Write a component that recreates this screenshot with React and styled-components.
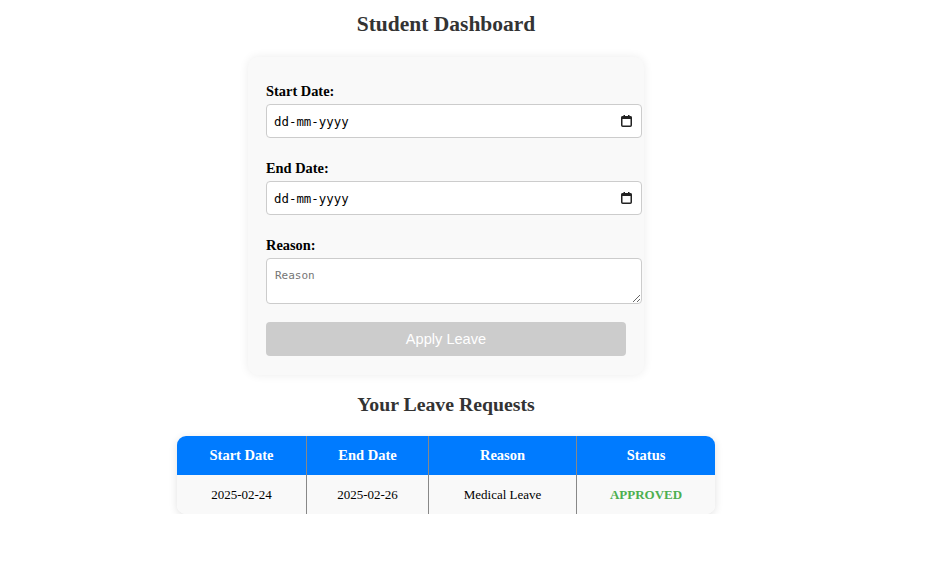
import React, { useState } from "react";
import styled, { createGlobalStyle } from "styled-components";

const GlobalStyle = createGlobalStyle`
  body {
    margin: 0;
    font-family: "Liberation Serif", "Times New Roman", serif;
    background: #fff;
  }
`;

const Page = styled.div`
  width: 892px;
  display: flex;
  flex-direction: column;
  align-items: center;
  padding-top: 12px;
`;

const Title = styled.h2`
  margin: 0 0 20px;
  font-size: 21.5px;
  color: #333;
`;

const Card = styled.form`
  width: 360px;
  padding: 18px 18px 19px;
  background: #f9f9f9;
  border-radius: 10px;
  box-shadow: 0 0 10px rgba(0, 0, 0, 0.08);
`;

const Field = styled.div`
  margin-top: ${(p) => (p.$first ? "8px" : "22px")};
  display: flex;
  flex-direction: column;
`;

const Label = styled.label`
  font-weight: bold;
  font-size: 14.4px;
  margin-bottom: 4px;
  color: #000;
`;

const DateBox = styled.div`
  position: relative;
  width: 376px;
`;

const DateInput = styled.input`
  display: block;
  box-sizing: border-box;
  width: 376px;
  height: 34px;
  padding: 0 30px 0 7px;
  border: 1px solid #ccc;
  border-radius: 4px;
  background: #fff;
  font-family: "DejaVu Sans Mono", monospace;
  font-size: 12.4px;
  color: #000;
  &::placeholder { color: #000; opacity: 1; }
`;

const CalendarIcon = styled.svg`
  position: absolute;
  right: 10px;
  top: 11px;
  pointer-events: none;
`;

const TextArea = styled.textarea`
  display: block;
  box-sizing: border-box;
  width: 376px;
  height: 46px;
  padding: 10px 8px 6px;
  border: 1px solid #ccc;
  border-radius: 4px;
  font-family: "DejaVu Sans Mono", monospace;
  font-size: 11px;
  resize: vertical;
  &::placeholder { color: #757575; }
`;

const Button = styled.button`
  margin-top: 18px;
  width: 100%;
  height: 34px;
  border: none;
  border-radius: 4px;
  background: #ccc;
  color: #fff;
  font-family: "Liberation Sans", Arial, sans-serif;
  font-size: 14.6px;
`;

const SubTitle = styled.h3`
  margin: 18px 0 20px;
  font-size: 19.8px;
  color: #333;
`;

const TableWrap = styled.div`
  width: 538px;
  border-radius: 9px;
  overflow: hidden;
  box-shadow: 0 2px 8px rgba(0, 0, 0, 0.12);
`;

const Table = styled.table`
  width: 100%;
  table-layout: fixed;
  border-collapse: separate;
  border-spacing: 0;
  font-size: 13px;
`;

const Th = styled.th`
  background: #007bff;
  color: #fff;
  height: 39px;
  padding: 0;
  font-size: 14.5px;
  border-left: 1px solid #888;
  &:first-child { border-left: none; }
`;

const Td = styled.td`
  background: #f9f9f9;
  height: 39px;
  padding: 0;
  text-align: center;
  border-left: 1px solid #888;
  &:first-child { border-left: none; }
  color: ${(p) => (p.$status ? "#4caf50" : "#000")};
  font-weight: ${(p) => (p.$status ? "bold" : "normal")};
`;

const columns = [
  { title: "Start Date", width: 129 },
  { title: "End Date", width: 122 },
  { title: "Reason", width: 148 },
  { title: "Status", width: 139 },
];

const requests = [
  { start: "2025-02-24", end: "2025-02-26", reason: "Medical Leave", status: "APPROVED" },
];

function DateField({ value, onChange }) {
  return (
    <DateBox>
      <DateInput placeholder="dd-mm-yyyy" value={value} onChange={onChange} />
      <CalendarIcon width="11" height="12" viewBox="0 0 11 12">
        <rect x="0.75" y="1.75" width="9.5" height="9.5" rx="1" fill="none" stroke="#222" strokeWidth="1.5" />
        <rect x="0.5" y="1.5" width="10" height="2.5" fill="#222" />
        <rect x="2.5" y="0" width="1.5" height="2" fill="#222" />
        <rect x="7" y="0" width="1.5" height="2" fill="#222" />
      </CalendarIcon>
    </DateBox>
  );
}

export default function App() {
  const [start, setStart] = useState("");
  const [end, setEnd] = useState("");
  const [reason, setReason] = useState("");

  return (
    <>
      <GlobalStyle />
      <Page>
        <Title>Student Dashboard</Title>
        <Card onSubmit={(e) => e.preventDefault()}>
          <Field $first>
            <Label>Start Date:</Label>
            <DateField value={start} onChange={(e) => setStart(e.target.value)} />
          </Field>
          <Field>
            <Label>End Date:</Label>
            <DateField value={end} onChange={(e) => setEnd(e.target.value)} />
          </Field>
          <Field>
            <Label>Reason:</Label>
            <TextArea placeholder="Reason" value={reason} onChange={(e) => setReason(e.target.value)} />
          </Field>
          <Button type="submit" disabled={!start || !end || !reason}>Apply Leave</Button>
        </Card>
        <SubTitle>Your Leave Requests</SubTitle>
        <TableWrap>
          <Table>
            <colgroup>
              {columns.map((c) => (
                <col key={c.title} style={{ width: c.width }} />
              ))}
            </colgroup>
            <thead>
              <tr>
                {columns.map((c) => (
                  <Th key={c.title}>{c.title}</Th>
                ))}
              </tr>
            </thead>
            <tbody>
              {requests.map((r) => (
                <tr key={r.start}>
                  <Td>{r.start}</Td>
                  <Td>{r.end}</Td>
                  <Td>{r.reason}</Td>
                  <Td $status>{r.status}</Td>
                </tr>
              ))}
            </tbody>
          </Table>
        </TableWrap>
      </Page>
    </>
  );
}
